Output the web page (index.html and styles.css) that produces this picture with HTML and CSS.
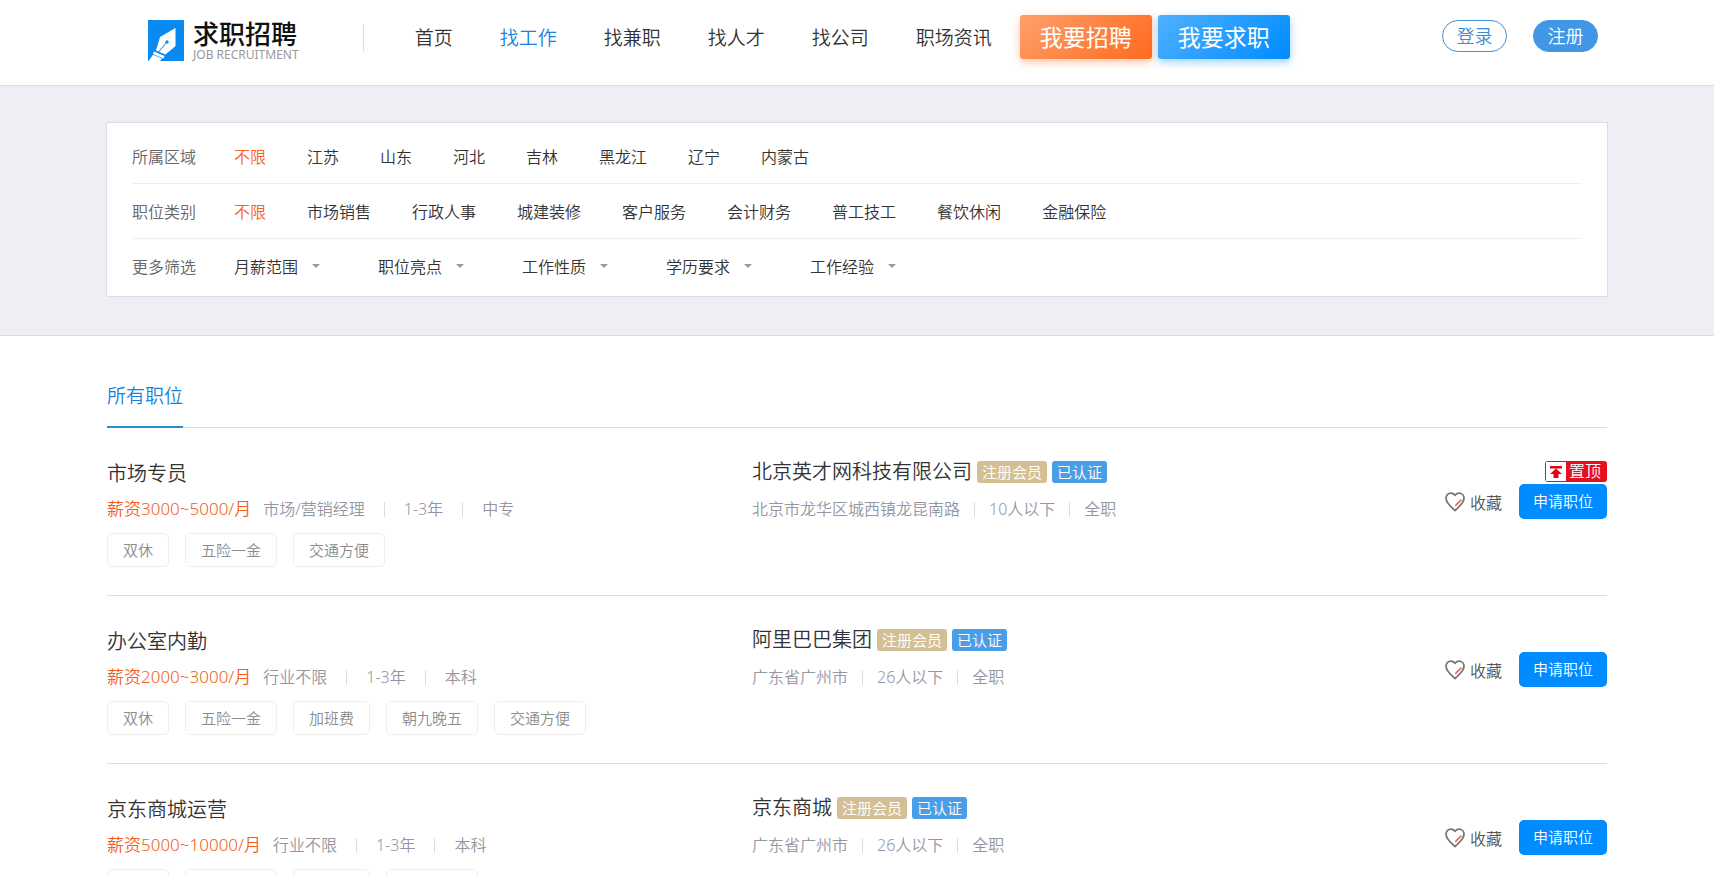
FILE: index.html
```html
<!DOCTYPE html>
<html lang="zh-CN">
<head>
<meta charset="utf-8">
<meta name="viewport" content="width=device-width, initial-scale=1">
<title>求职招聘 - 找工作</title>
<link rel="stylesheet" href="styles.css">
</head>
<body>
<svg class="sprite" aria-hidden="true">
  <symbol id="heart" viewBox="0 0 20 20">
    <path d="M10 18.600C7.200 15.900 1 11.200 1 6.300C1 3.200 3.200 1.200 5.700 1.200C7.600 1.200 9.200 2.200 10 3.300C10.800 2.200 12.400 1.200 14.300 1.200C16.800 1.200 19 3.200 19 6.300C19 11.200 12.800 15.900 10 18.600Z" fill="#fff" stroke="#777" stroke-width="1.800" stroke-linejoin="round"/>
    <path d="M10.800 13.300L16 8" stroke="#e8604c" stroke-width="1.600" stroke-linecap="round"/>
  </symbol>
</svg>

<header class="header">
  <div class="container header-inner">
    <a class="logo" href="#">
      <svg class="logo-mark" viewBox="0 0 36 41" aria-hidden="true">
        <rect width="36" height="41" fill="#0a8af0"/>
        <path d="M27.500 8L12 17L8 30.500L17.500 34.500L27.500 26Z" fill="#fff"/>
        <path d="M10.500 32L18.500 22.500" stroke="#0a8af0" stroke-width="1"/>
        <circle cx="19" cy="22" r="1.700" fill="#0a8af0"/>
        <path d="M6 31.500L16.500 36L15.500 38.500L5 34Z" fill="#fff"/>
        <path d="M5 34.800L14 38.500L12 41H0.500Z" fill="#fff"/>
      </svg>
      <span class="logo-text">
        <span class="logo-cn">求职招聘</span>
        <span class="logo-en">JOB RECRUITMENT</span>
      </span>
    </a>
    <nav class="nav">
      <a href="#">首页</a>
      <a class="active" href="#">找工作</a>
      <a href="#">找兼职</a>
      <a href="#">找人才</a>
      <a href="#">找公司</a>
      <a href="#">职场资讯</a>
    </nav>
    <div class="cta">
      <button class="cta-btn hire" type="button">我要招聘</button>
      <button class="cta-btn seek" type="button">我要求职</button>
    </div>
    <div class="account">
      <a class="pill" href="#">登录</a>
      <a class="pill filled" href="#">注册</a>
    </div>
  </div>
</header>

<section class="filter-band">
  <div class="filter-box">
    <div class="filter-row">
      <span class="filter-label">所属区域</span>
      <div class="filter-options">
        <a class="active" href="#">不限</a>
        <a href="#">江苏</a>
        <a href="#">山东</a>
        <a href="#">河北</a>
        <a href="#">吉林</a>
        <a href="#">黑龙江</a>
        <a href="#">辽宁</a>
        <a href="#">内蒙古</a>
      </div>
    </div>
    <div class="filter-row">
      <span class="filter-label">职位类别</span>
      <div class="filter-options">
        <a class="active" href="#">不限</a>
        <a href="#">市场销售</a>
        <a href="#">行政人事</a>
        <a href="#">城建装修</a>
        <a href="#">客户服务</a>
        <a href="#">会计财务</a>
        <a href="#">普工技工</a>
        <a href="#">餐饮休闲</a>
        <a href="#">金融保险</a>
      </div>
    </div>
    <div class="filter-row">
      <span class="filter-label">更多筛选</span>
      <div class="filter-menus">
        <button type="button">月薪范围</button>
        <button type="button">职位亮点</button>
        <button type="button">工作性质</button>
        <button type="button">学历要求</button>
        <button type="button">工作经验</button>
      </div>
    </div>
  </div>
</section>

<main class="container">
  <div class="tabs">
    <a class="tab" href="#">所有职位</a>
  </div>

  <article class="job">
    <div class="job-main">
      <h2 class="job-title">市场专员</h2>
      <div class="job-meta"><span class="salary">薪资3000~5000/月</span><span>市场/营销经理</span><i></i><span>1-3年</span><i></i><span>中专</span></div>
      <div class="tags"><span>双休</span><span>五险一金</span><span>交通方便</span></div>
    </div>
    <div class="company">
      <h3 class="company-name">北京英才网科技有限公司<span class="badge member">注册会员</span><span class="badge verified">已认证</span></h3>
      <div class="company-meta"><span>北京市龙华区城西镇龙昆南路</span><i></i><span>10人以下</span><i></i><span>全职</span></div>
    </div>
    <div class="actions">
      <span class="pin">
        <svg viewBox="0 0 20 19" aria-hidden="true"><path d="M4 4H16V6.500H4ZM10 6.500L16 12H12.500V16H7.500V12H4Z" fill="#e60012"/></svg>
        置顶
      </span>
      <div class="action-line">
        <button class="favorite" type="button"><svg aria-hidden="true"><use href="#heart"/></svg>收藏</button>
        <button class="apply" type="button">申请职位</button>
      </div>
    </div>
  </article>

  <article class="job">
    <div class="job-main">
      <h2 class="job-title">办公室内勤</h2>
      <div class="job-meta"><span class="salary">薪资2000~3000/月</span><span>行业不限</span><i></i><span>1-3年</span><i></i><span>本科</span></div>
      <div class="tags"><span>双休</span><span>五险一金</span><span>加班费</span><span>朝九晚五</span><span>交通方便</span></div>
    </div>
    <div class="company">
      <h3 class="company-name">阿里巴巴集团<span class="badge member">注册会员</span><span class="badge verified">已认证</span></h3>
      <div class="company-meta"><span>广东省广州市</span><i></i><span>26人以下</span><i></i><span>全职</span></div>
    </div>
    <div class="actions">
      <div class="action-line">
        <button class="favorite" type="button"><svg aria-hidden="true"><use href="#heart"/></svg>收藏</button>
        <button class="apply" type="button">申请职位</button>
      </div>
    </div>
  </article>

  <article class="job">
    <div class="job-main">
      <h2 class="job-title">京东商城运营</h2>
      <div class="job-meta"><span class="salary">薪资5000~10000/月</span><span>行业不限</span><i></i><span>1-3年</span><i></i><span>本科</span></div>
      <div class="tags"><span>双休</span><span>五险一金</span><span>加班费</span><span>朝九晚五</span></div>
    </div>
    <div class="company">
      <h3 class="company-name">京东商城<span class="badge member">注册会员</span><span class="badge verified">已认证</span></h3>
      <div class="company-meta"><span>广东省广州市</span><i></i><span>26人以下</span><i></i><span>全职</span></div>
    </div>
    <div class="actions">
      <div class="action-line">
        <button class="favorite" type="button"><svg aria-hidden="true"><use href="#heart"/></svg>收藏</button>
        <button class="apply" type="button">申请职位</button>
      </div>
    </div>
  </article>
</main>
</body>
</html>
```
FILE: styles.css
```css
* {
  box-sizing: border-box;
}

body {
  margin: 0;
  background: #fff;
  color: #333;
  font-family: "Noto Sans", "Noto Sans CJK SC", sans-serif;
  font-size: 16px;
  font-weight: 350;
  white-space: nowrap;
}

a {
  color: inherit;
  text-decoration: none;
}

button {
  padding: 0;
  border: 0;
  background: none;
  color: inherit;
  font: inherit;
  cursor: pointer;
}

h2,
h3 {
  margin: 0;
  font-weight: inherit;
}

.sprite {
  display: none;
}

.container {
  max-width: 1500px;
  margin: 0 auto;
}

/* Header */
.header {
  border-bottom: 1px solid #dcdfde;
}

.header-inner {
  display: flex;
  align-items: flex-start;
  padding: 15px 9px 24px 41px;
}

.logo {
  display: flex;
  gap: 9px;
  padding-top: 5px;
}

.logo-mark {
  width: 36px;
  height: 41px;
}

.logo-text {
  display: flex;
  flex-direction: column;
}

.logo-cn {
  color: #111;
  font-size: 26px;
  font-weight: 500;
  line-height: 28px;
}

.logo-en {
  color: #999;
  font-size: 12px;
  font-weight: 400;
  line-height: 13px;
}

.nav {
  display: flex;
  gap: 47px;
  margin: 9px 0 0 64px;
  padding-left: 51px;
  border-left: 1px solid #ddd;
  font-size: 19px;
  line-height: 28px;
}

.nav .active {
  color: #1a7fe0;
}

.cta {
  display: flex;
  gap: 6px;
  margin-left: 28px;
}

.cta-btn {
  height: 44px;
  padding: 0 20px;
  border-radius: 3px;
  color: #fff;
  font-size: 23px;
  font-weight: 400;
  line-height: 44px;
}

.hire {
  background: linear-gradient(135deg, #ff9f6c, #ff6a1c);
  box-shadow: 0 3px 8px rgba(255, 106, 28, 0.4);
}

.seek {
  background: linear-gradient(135deg, #4fb0ff, #008cff);
  box-shadow: 0 3px 8px rgba(0, 140, 255, 0.4);
}

.account {
  display: flex;
  gap: 26px;
  margin: 5px 0 0 auto;
}

.pill {
  width: 65px;
  height: 32px;
  border: 1px solid #4393d8;
  border-radius: 16px;
  color: #3b8bd0;
  font-size: 18px;
  line-height: 30px;
  text-align: center;
}

.filled {
  border-color: #4196e6;
  background: #4196e6;
  color: #fff;
}

/* Filters */
.filter-band {
  padding: 36px 0 38px;
  border-bottom: 1px solid #dcdde0;
  background: #eeeff4;
}

.filter-box {
  max-width: 1502px;
  margin: 0 auto;
  padding: 6px 25px 3px;
  border: 1px solid #dcdee1;
  background: #fff;
}

.filter-row {
  display: flex;
  align-items: center;
  height: 55px;
  border-bottom: 1px solid #eee;
}

.filter-row:last-child {
  height: 54px;
  border-bottom: 0;
}

.filter-label {
  width: 102px;
  color: #666;
}

.filter-options {
  display: flex;
  gap: 41px;
}

.filter-options .active {
  color: #f8631f;
}

.filter-menus {
  display: flex;
}

.filter-menus button {
  display: flex;
  align-items: center;
  gap: 14px;
  width: 144px;
}

.filter-menus button::after {
  content: "";
  border: 4px solid transparent;
  border-top-color: #999;
  border-bottom-width: 0;
}

/* Job list */
.tabs {
  display: flex;
  padding-top: 40px;
  border-bottom: 1px solid #dcdfe2;
}

.tab {
  margin-bottom: -1px;
  padding: 6px 0 15px;
  border-bottom: 2px solid #2b8bc6;
  color: #1a7fe0;
  font-size: 19px;
  line-height: 29px;
}

.job {
  display: grid;
  grid-template-columns: 43% 1fr auto;
  padding-bottom: 28px;
  border-bottom: 1px solid #ddd;
}

.job-main {
  padding-top: 31px;
}

.job-title,
.company-name {
  font-size: 20px;
  line-height: 30px;
}

.job-meta,
.company-meta {
  display: flex;
  align-items: center;
  color: #9696a2;
  line-height: 30px;
}

.job-meta {
  margin-top: 5px;
}

.job-meta i,
.company-meta i {
  width: 1px;
  height: 15px;
  margin: 0 19px;
  background: #ddd;
}

.company-meta i {
  margin: 0 14px;
}

.salary {
  margin-right: 12px;
  color: #f0601c;
  font-size: 17px;
}

.tags {
  display: flex;
  gap: 16px;
  margin-top: 9px;
}

.tags span {
  padding: 0 15px;
  border: 1px solid #eee;
  border-radius: 5px;
  color: #8c8c8c;
  font-size: 15px;
  line-height: 32px;
}

.company {
  padding-top: 29px;
}

.company-name {
  display: flex;
  align-items: center;
}

.badge {
  margin-left: 5px;
  padding: 0 5px;
  border-radius: 3px;
  color: #fff;
  font-size: 15px;
  line-height: 22px;
}

.member {
  background: #d4bf94;
}

.verified {
  background: #4a9ee8;
}

.company-meta {
  margin-top: 7px;
}

.actions {
  display: flex;
  flex-direction: column;
  align-items: flex-end;
  justify-content: flex-end;
  gap: 2px;
  height: 91px;
}

.pin {
  display: flex;
  align-items: center;
  gap: 3px;
  height: 21px;
  padding: 1px 6px 1px 1px;
  border-radius: 3px;
  background: #e60f1e;
  color: #fff;
  font-size: 16px;
  line-height: 19px;
}

.pin svg {
  width: 20px;
  height: 19px;
  background: #fff;
}

.action-line {
  display: flex;
  gap: 17px;
}

.favorite {
  display: flex;
  align-items: center;
  gap: 5px;
  color: #555;
}

.favorite svg {
  width: 20px;
  height: 20px;
}

.apply {
  height: 35px;
  padding: 0 14px;
  border-radius: 5px;
  background: #008cff;
  color: #fff;
  font-size: 15px;
  line-height: 35px;
}
```
